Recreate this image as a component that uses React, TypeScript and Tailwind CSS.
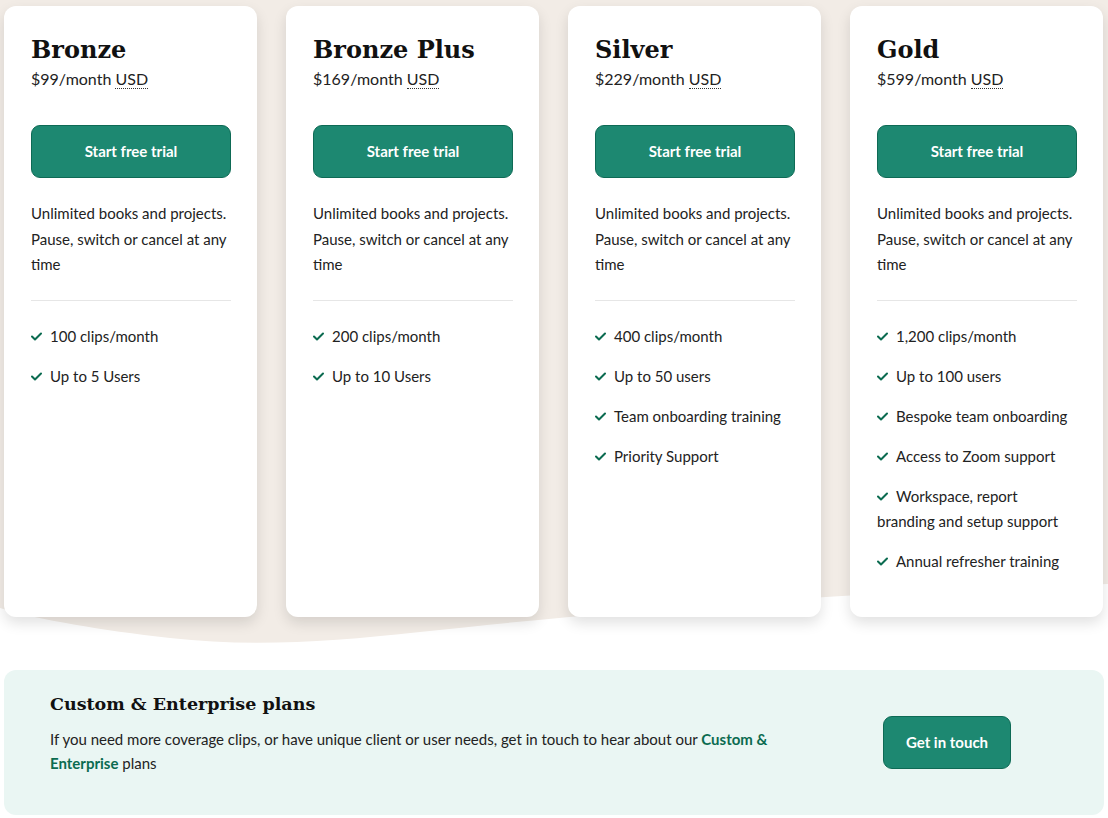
import React from 'react';

type Plan = {
  name: string;
  price: string;
  features: string[];
};

const plans: Plan[] = [
  { name: 'Bronze', price: '$99', features: ['100 clips/month', 'Up to 5 Users'] },
  { name: 'Bronze Plus', price: '$169', features: ['200 clips/month', 'Up to 10 Users'] },
  {
    name: 'Silver',
    price: '$229',
    features: ['400 clips/month', 'Up to 50 users', 'Team onboarding training', 'Priority Support'],
  },
  {
    name: 'Gold',
    price: '$599',
    features: [
      '1,200 clips/month',
      'Up to 100 users',
      'Bespoke team onboarding',
      'Access to Zoom support',
      'Workspace, report branding and setup support',
      'Annual refresher training',
    ],
  },
];

const sans = "font-['Lato','Liberation_Sans',sans-serif]";
const serif = "font-['DejaVu_Serif','Liberation_Serif',serif]";

function Check() {
  return (
    <svg width="11" height="9" viewBox="0 0 11 9" className="inline-block mr-[8px] -mt-[2px] align-middle">
      <polyline points="1,4.5 4,7.5 10,1.5" fill="none" stroke="#0b6b50" strokeWidth="2" strokeLinecap="round" strokeLinejoin="round" />
    </svg>
  );
}

function PlanCard({ plan }: { plan: Plan }) {
  return (
    <div className="w-[253px] shrink-0 bg-white rounded-[12px] shadow-[0_6px_14px_rgba(0,0,0,0.12)] pl-[27px] pr-[26px] pt-[28px] pb-[43px]">
      <h2 className={`${serif} font-bold text-[24px] leading-[32px] text-[#111]`}>{plan.name}</h2>
      <p className={`${sans} text-[16px] leading-[24px] text-[#222] mt-[1px]`}>
        {plan.price}/month{' '}
        <abbr title="US Dollars" className="no-underline border-b border-dotted border-[#333]">USD</abbr>
      </p>
      <button className={`${sans} mt-[34px] w-full h-[53px] rounded-[9px] bg-[#1d8871] border border-[#0e6a55] text-white font-bold text-[15px]`}>
        Start free trial
      </button>
      <p className={`${sans} mt-[23px] text-[15px] leading-[25.5px] text-[#222]`}>
        Unlimited books and projects. Pause, switch or cancel at any time
      </p>
      <div className="mt-[22px] h-px bg-[#e6e6e6]" />
      <ul className={`${sans} mt-[23px] flex flex-col gap-[15px] text-[15px] leading-[25px] text-[#222]`}>
        {plan.features.map((f) => (
          <li key={f}>
            <Check />
            {f}
          </li>
        ))}
      </ul>
    </div>
  );
}

export default function App() {
  return (
    <main className="min-h-screen bg-white w-[1108px] overflow-hidden">
      <div className="relative">
        {/* beige backdrop with curved bottom */}
        <svg className="absolute left-0 top-0" width="1108" height="660" viewBox="0 0 1108 660">
          <path d="M0,0 H1108 V584 C880,590 620,610 420,632 C330,642 250,647 170,638 C100,630 40,620 0,608 Z" fill="#f2ece6" />
        </svg>
        <div className="relative flex gap-[29px] px-[4px] pt-[6px]">
          {plans.map((p) => (
            <PlanCard key={p.name} plan={p} />
          ))}
        </div>
      </div>

      <section className="mx-[4px] mt-[53px] h-[145px] rounded-[12px] bg-[#eaf6f3] flex items-center pl-[46px] pr-[93px]">
        <div className="w-[740px] self-start pt-[20px]">
          <h3 className={`${serif} font-bold text-[17.5px] leading-[28px] text-[#111]`}>Custom &amp; Enterprise plans</h3>
          <p className={`${sans} mt-[9px] text-[15px] leading-[24px] text-[#222]`}>
            If you need more coverage clips, or have unique client or user needs, get in touch to hear about our{' '}
            <span className="font-bold text-[#0b6b50]">Custom &amp;</span>{' '}
            <span className="font-bold text-[#0b6b50]">Enterprise</span> plans
          </p>
        </div>
        <button className={`${sans} ml-auto w-[128px] h-[53px] rounded-[9px] bg-[#1d8871] border border-[#0e6a55] text-white font-bold text-[15px]`}>
          Get in touch
        </button>
      </section>
    </main>
  );
}
